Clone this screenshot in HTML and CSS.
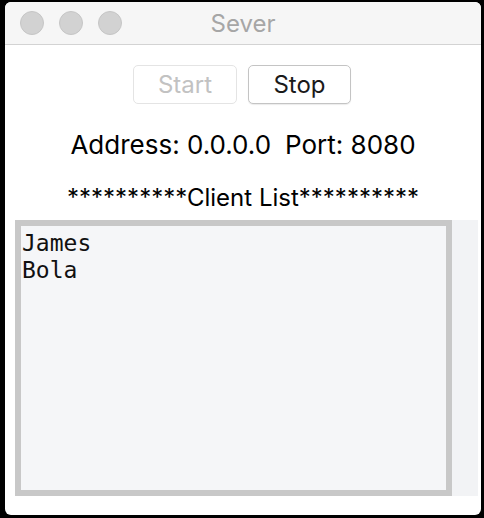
FILE: index.html
```html
<!DOCTYPE html>
<html>
<head>
<meta charset="utf-8">
<link rel="stylesheet" href="styles.css">
</head>
<body>
<div class="window">
  <div class="titlebar">
    <div class="lights">
      <span class="light"></span>
      <span class="light"></span>
      <span class="light"></span>
    </div>
    <div class="title">Sever</div>
    <div class="spacer"></div>
  </div>
  <div class="content">
    <div class="buttons">
      <button class="btn btn-start" disabled>Start</button>
      <button class="btn btn-stop">Stop</button>
    </div>
    <div class="info"><span>Address: 0.0.0.0</span><span>Port: 8080</span></div>
    <div class="heading">**********Client List**********</div>
    <div class="list-row">
      <div class="listbox">
        <div class="item">James</div>
        <div class="item">Bola</div>
      </div>
      <div class="scroll"></div>
    </div>
  </div>
</div>
</body>
</html>
```
FILE: styles.css
```css
html, body {
  margin: 0;
  padding: 0;
  background: #000;
}
body {
  width: 484px;
  height: 518px;
  overflow: hidden;
  font-family: "Inter", "Liberation Sans", sans-serif;
}
.window {
  margin: 2px 0 0 5px;
  width: 476px;
  height: 513px;
  background: #fff;
  border-radius: 6px;
  overflow: hidden;
  display: flex;
  flex-direction: column;
}
.titlebar {
  height: 42px;
  border-bottom: 1px solid #d3d3d3;
  background: #f6f6f6;
  display: grid;
  grid-template-columns: 1fr auto 1fr;
  align-items: center;
}
.lights {
  display: flex;
  gap: 15px;
  padding-left: 15px;
}
.light {
  width: 24px;
  height: 24px;
  border-radius: 50%;
  background: #d2d2d2;
  border: 0.5px solid #c6c6c6;
  box-sizing: border-box;
}
.title {
  font-size: 24px;
  color: #a6a6a6;
  padding-top: 1px;
}
.content {
  display: flex;
  flex-direction: column;
  align-items: center;
}
.buttons {
  display: flex;
  gap: 11px;
  margin-top: 20px;
  margin-left: -2px;
}
.btn {
  height: 39px;
  border-radius: 5px;
  background: #fff;
  font-family: "Inter", "Liberation Sans", sans-serif;
  font-size: 24px;
  padding: 0;
}
.btn-start {
  width: 104px;
  border: 1px solid #e4e4e4;
  color: #c2c2c2;
}
.btn-stop {
  width: 103px;
  border: 1px solid #c4c4c4;
  color: #1a1a1a;
  box-shadow: 0 1px 1px rgba(0,0,0,0.08);
}
.info {
  display: flex;
  gap: 14px;
  font-size: 26px;
  color: #000;
  margin-top: 26px;
  line-height: 30px;
}
.heading {
  font-size: 24px;
  color: #000;
  margin-top: 23px;
  line-height: 30px;
}
.list-row {
  align-self: stretch;
  display: flex;
  margin-top: 7px;
  padding-left: 10px;
}
.listbox {
  box-sizing: border-box;
  width: 437px;
  height: 276px;
  border: 6px solid #c8c8c8;
  background: #f5f6f8;
  padding: 4px 1px;
  font-family: "DejaVu Sans Mono", "Liberation Mono", monospace;
  font-size: 23px;
  line-height: 27px;
  color: #111;
}
.scroll {
  width: 26px;
  height: 276px;
  background: #f2f3f5;
}
```
